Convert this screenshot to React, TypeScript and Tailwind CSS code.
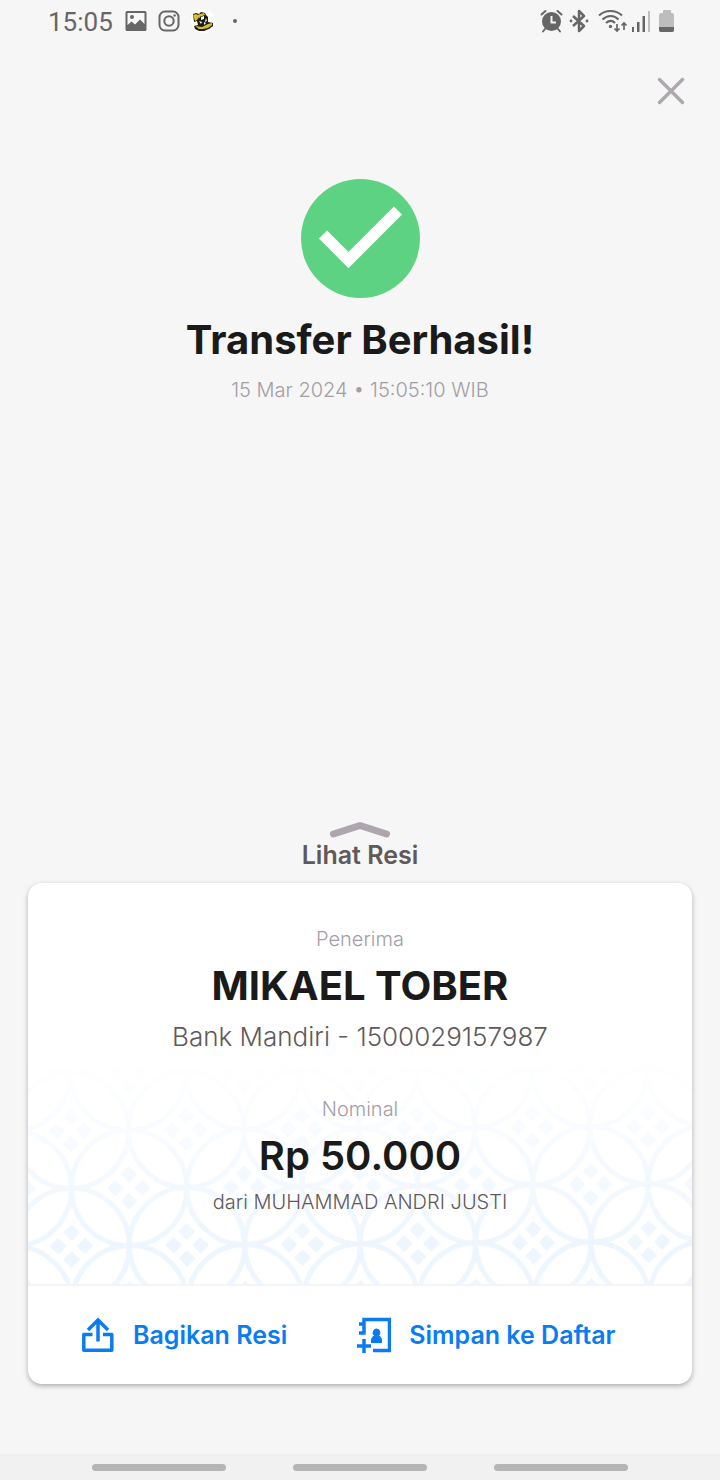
const batteryLevel = 28;

const navKeys = ["Recent apps", "Home", "Back"];

export default function TransferSuccessPage() {
  return (
    <div className="flex min-h-screen flex-col bg-[#f6f6f6] font-['Inter','Liberation_Sans',sans-serif] text-[#1a1a1a]">
      <StatusBar />
      <header className="flex justify-end px-5 pt-[18px]">
        <button aria-label="Tutup" className="flex size-[58px] items-center justify-center text-[#aea8ae]" type="button">
          <CloseIcon />
        </button>
      </header>

      <main className="flex flex-1 flex-col px-7 pb-[70px]">
        <section className="flex flex-col items-center pt-[59px]">
          <SuccessIcon />
          <h1 className="mt-[18px] text-[40px] leading-12 font-bold">Transfer Berhasil!</h1>
          <p className="mt-[14px] text-[20px] leading-6 font-light text-[#a49da4]">15 Mar 2024 • 15:05:10 WIB</p>
        </section>

        <section className="mt-auto">
          <button className="mx-auto flex flex-col items-center text-[25px] leading-8 font-semibold text-[#5f595b]" type="button">
            <ChevronUp />
            Lihat Resi
          </button>
          <ReceiptCard />
        </section>
      </main>

      <nav className="flex h-[26px] items-center justify-center gap-[67px] bg-[#f1f1f1]">
        {navKeys.map((key) => (
          <button key={key} aria-label={key} className="h-[7px] w-[134px] rounded-full bg-[#b5b5b5]" type="button" />
        ))}
      </nav>
    </div>
  );
}

function StatusBar() {
  return (
    <div className="flex h-11 items-center justify-between pr-[46px] pb-[2px] pl-12 text-[#666]">
      <div className="flex items-center">
        <span className="w-[77px] pt-[2px] font-['Roboto','Liberation_Sans',sans-serif] text-[26px] leading-8">15:05</span>
        <div className="flex items-center gap-[11px]">
          <GalleryIcon />
          <CameraIcon />
          <MascotIcon />
          <span className="ml-[7px] size-1 rounded-full bg-[#666]" />
        </div>
      </div>
      <div className="flex items-center">
        <AlarmIcon />
        <BluetoothIcon />
        <WifiIcon />
        <SignalIcon />
        <BatteryIcon level={batteryLevel} />
      </div>
    </div>
  );
}

function ReceiptCard() {
  return (
    <article className="mt-3 overflow-hidden rounded-[14px] bg-white shadow-[0_2px_5px_rgba(0,0,0,0.3)]">
      <div className="relative h-[401px] text-center">
        <ReceiptPattern />
        <div className="relative flex flex-col items-center pt-11">
          <p className="text-[20px] leading-6 font-light text-[#a49da4]">Penerima</p>
          <h2 className="mt-[11px] text-[40px] leading-12 font-bold">MIKAEL TOBER</h2>
          <p className="mt-[9px] text-[26px] leading-9 font-light text-[#5f595b]">Bank Mandiri - 1500029157987</p>
          <p className="mt-[42px] text-[20px] leading-6 font-light text-[#a49da4]">Nominal</p>
          <p className="mt-[11px] text-[40px] leading-12 font-semibold">Rp 50.000</p>
          <p className="mt-[10px] text-[20px] leading-6 font-light text-[#5f595b]">dari MUHAMMAD ANDRI JUSTI</p>
        </div>
      </div>
      <div className="flex h-[100px] items-center gap-[70px] border-t-2 border-[#f4f4f5] pl-[53px] text-[25px] leading-8 font-semibold text-[#0a7cf2]">
        <button className="flex items-center gap-[18px]" type="button">
          <ShareIcon />
          Bagikan Resi
        </button>
        <button className="flex items-center gap-[18px]" type="button">
          <AddContactIcon />
          Simpan ke Daftar
        </button>
      </div>
    </article>
  );
}

// Kawung-like batik tile: overlapping circles with four small diamonds in each gap
function ReceiptPattern() {
  return (
    <svg aria-hidden="true" className="absolute bottom-0 left-0 h-[226px] w-full">
      <defs>
        <pattern height="115.4" id="kawung" patternTransform="translate(43.7 188) rotate(-0.43)" patternUnits="userSpaceOnUse" width="115.4">
          <g fill="none" stroke="#edf5fe" strokeWidth="5">
            <circle cx="0" cy="0" r="57.7" />
            <circle cx="115.4" cy="0" r="57.7" />
            <circle cx="0" cy="115.4" r="57.7" />
            <circle cx="115.4" cy="115.4" r="57.7" />
            <circle cx="57.7" cy="57.7" r="57.7" />
          </g>
          <g fill="#edf5fe" stroke="#edf5fe" strokeLinejoin="round" strokeWidth="2">
            {[[0, 0], [115.4, 0], [0, 115.4], [115.4, 115.4], [57.7, 57.7]].map(([x, y]) => (
              <path d="M0-20.500l7 7L0-6.500l-7-7zM0 6.500l7 7L0 20.500l-7-7zM-13.500-7L-6.500 0l-7 7L-20.500 0zM13.500-7L20.500 0l-7 7L6.500 0z" key={`${x}-${y}`} transform={`translate(${x} ${y})`} />
            ))}
          </g>
        </pattern>
        <linearGradient id="fade" x1="0" x2="0" y1="0" y2="1">
          <stop offset="0" stopColor="#fff" stopOpacity="0" />
          <stop offset="0.85" stopColor="#fff" />
        </linearGradient>
        <mask id="fadeMask">
          <rect fill="url(#fade)" height="100%" width="100%" />
        </mask>
      </defs>
      <rect fill="url(#kawung)" height="100%" mask="url(#fadeMask)" width="100%" />
    </svg>
  );
}

function CloseIcon() {
  return (
    <svg className="size-[30px]" fill="none" stroke="currentColor" strokeLinecap="round" strokeWidth="3.500" viewBox="0 0 30 30">
      <path d="M3.500 3.500l23 23M26.500 3.500l-23 23" />
    </svg>
  );
}

function SuccessIcon() {
  return (
    <svg aria-hidden="true" className="size-[119px]" viewBox="0 0 119 119">
      <circle cx="59.500" cy="59.500" fill="#5dd283" r="59.500" />
      <path d="M22 55.500l25.500 25.500L97 31.500" fill="none" stroke="#fff" strokeWidth="11.500" />
    </svg>
  );
}

function ChevronUp() {
  return (
    <svg aria-hidden="true" className="h-[17px] w-[60px]" fill="none" stroke="#aea5ae" strokeLinecap="round" strokeLinejoin="round" strokeWidth="7" viewBox="0 0 60 17">
      <path d="M3.500 12L30 3.500 56.500 12" />
    </svg>
  );
}

function ShareIcon() {
  return (
    <svg aria-hidden="true" className="h-9 w-[34px]" fill="none" stroke="currentColor" strokeWidth="3.500" viewBox="0 0 34 36">
      <path d="M11.500 17.500H2.800v15.700h28V17.500H22" strokeLinejoin="round" />
      <path d="M17 24.500V3.500M7 13L17 3l10 10" />
    </svg>
  );
}

function AddContactIcon() {
  return (
    <svg aria-hidden="true" className="h-9 w-[34px]" fill="none" stroke="currentColor" strokeWidth="3.500" viewBox="0 0 34 36">
      <path d="M16 33.500h16.500V2.500H7v14.300M2 7h6M2 16h6.700M0 29h14M7 22v14" />
      <path d="M19.500 11.500a4 4 0 0 1 2.500 7c1.500 1 3 2.500 3 4.500v3H14v-3c0-2 1.500-3.500 3-4.500a4 4 0 0 1 2.500-7z" fill="currentColor" stroke="none" />
    </svg>
  );
}

function GalleryIcon() {
  return (
    <svg aria-hidden="true" className="size-[22px]" viewBox="0 0 22 22">
      <path d="M2 1h18a1.500 1.500 0 0 1 1.500 1.500v17A1.500 1.500 0 0 1 20 21H2a1.500 1.500 0 0 1-1.500-1.500v-17A1.500 1.500 0 0 1 2 1zM2.500 3v12l4-3.500 3.500 3 5-5 4.500 4.500V3z" fill="currentColor" fillRule="evenodd" />
      <circle cx="7" cy="7" fill="currentColor" r="2" />
    </svg>
  );
}

function CameraIcon() {
  return (
    <svg aria-hidden="true" className="size-[22px]" fill="none" stroke="currentColor" strokeWidth="2" viewBox="0 0 22 22">
      <rect height="19" rx="5.500" width="19" x="1.500" y="1.500" />
      <circle cx="11" cy="11" r="4.700" />
      <circle cx="16.600" cy="5.500" fill="currentColor" r="1.200" stroke="none" />
    </svg>
  );
}

function MascotIcon() {
  return (
    <svg aria-hidden="true" className="size-6" viewBox="0 0 24 24">
      <circle cx="12" cy="12" fill="#fff" r="12" />
      <path d="M2 5l3-1 3 1 2-2 4 1 1 2 2 2v5l5 1v3l-4 3-5 2H8l-4-2-1-3 4-1-1-4-3 1z" fill="#201c12" />
      <path d="M2 6l3-1 2 1 2-1 4-1 1 2-3 1-3 1-2 3-2 1zM4 17l7 1 6-3 4-1v2l-4 3-5 1H8zM7 8l2-1v2z" fill="#d3bd35" />
      <path d="M10 8l3-1v3l-3 1zM15 9l1 3-2 1zM8 12l3 1-1 2zM13 13l2 1-2 2z" fill="#fff" />
    </svg>
  );
}

function AlarmIcon() {
  return (
    <svg aria-hidden="true" className="mr-[6px] h-6 w-[23px]" fill="none" stroke="currentColor" strokeLinecap="round" strokeWidth="2" viewBox="0 0 23 24">
      <circle cx="11.500" cy="12.500" fill="currentColor" r="8.500" />
      <path d="M1.500 5.500L5.500 2M21.500 5.500L17.500 2M5 20l-2 2.500M18 20l2 2.500" />
      <path d="M11.500 7v6.500h4.500" stroke="#f6f6f6" strokeLinecap="butt" />
    </svg>
  );
}

function BluetoothIcon() {
  return (
    <svg aria-hidden="true" className="mr-[9px] h-6 w-5" fill="none" stroke="currentColor" strokeWidth="2.500" viewBox="0 0 20 24">
      <path d="M4 7l11 10-5 5V2l5 5L4 17" strokeLinejoin="round" />
      <circle cx="2" cy="12" fill="currentColor" r="1.400" stroke="none" />
      <circle cx="18" cy="12" fill="currentColor" r="1.400" stroke="none" />
    </svg>
  );
}

function WifiIcon() {
  return (
    <svg aria-hidden="true" className="mr-[5px] h-6 w-[29px]" fill="none" stroke="currentColor" strokeWidth="2.200" viewBox="0 0 29 24">
      <path d="M1 6.500c6.500-6 16.500-6 23 0M4.500 10.500c5-4.700 11.500-4.700 16 0M8 14c3-2.500 6.500-2.500 9 0" />
      <circle cx="12.500" cy="17.500" fill="currentColor" r="1.700" stroke="none" />
      <path d="M19 15v7M16.500 19.500l2.500 2.500 2.500-2.500M26 21v-7M23.500 16.500L26 14l2.500 2.500" strokeWidth="1.700" />
    </svg>
  );
}

function SignalIcon() {
  return (
    <svg aria-hidden="true" className="mr-2 h-6 w-[19px]" viewBox="0 0 19 24">
      <path d="M0 18h2v5H0zM5 13h2.500v10H5zM10.500 7H13v16h-2.500z" fill="currentColor" />
      <path d="M16 2h2v21h-2z" fill="#bdbdbd" />
    </svg>
  );
}

function BatteryIcon({ level }: Readonly<{ level: number }>) {
  return (
    <div className="flex h-[22px] w-[15px] flex-col items-center">
      <span className="h-[3px] w-2 rounded-t-[1px] bg-[#bdbdbd]" />
      <div className="flex w-full flex-1 flex-col justify-end overflow-hidden rounded-[2px] bg-[#bdbdbd]">
        <span className="bg-[#666]" style={{ height: `${level}%` }} />
      </div>
    </div>
  );
}
